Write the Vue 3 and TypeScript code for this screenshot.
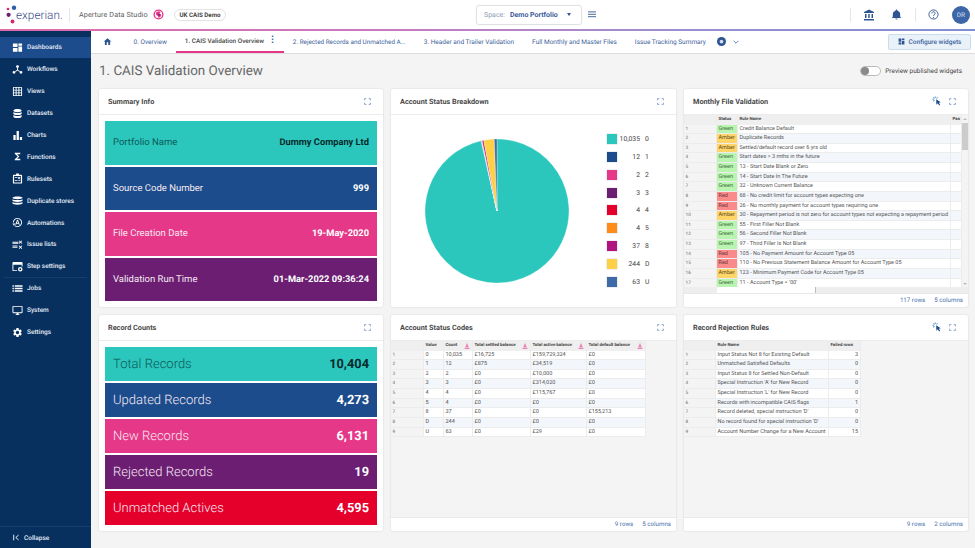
<script setup lang="ts">
interface NavItem { label: string; icon: string }
const gear = 'M19.14 12.94c.04-.3.06-.61.06-.94 0-.32-.02-.64-.07-.94l2.03-1.58c.18-.14.23-.41.12-.61l-1.92-3.32c-.12-.22-.37-.29-.59-.22l-2.39.96c-.5-.38-1.03-.7-1.62-.94l-.36-2.54c-.04-.24-.24-.41-.48-.41h-3.84c-.24 0-.43.17-.47.41l-.36 2.54c-.59.24-1.13.57-1.62.94l-2.39-.96c-.22-.08-.47 0-.59.22L2.74 8.87c-.12.21-.08.47.12.61l2.03 1.58c-.05.3-.09.63-.09.94s.02.64.07.94l-2.03 1.58c-.18.14-.23.41-.12.61l1.92 3.32c.12.22.37.29.59.22l2.39-.96c.5.38 1.03.7 1.62.94l.36 2.54c.05.24.24.41.48.41h3.84c.24 0 .44-.17.47-.41l.36-2.54c.59-.24 1.13-.56 1.62-.94l2.39.96c.22.08.47 0 .59-.22l1.92-3.32c.12-.22.07-.47-.12-.61l-2.01-1.58zM12 15.6c-1.98 0-3.6-1.62-3.6-3.6s1.62-3.6 3.6-3.6 3.6 1.62 3.6 3.6-1.62 3.6-3.6 3.6z'
const nav: NavItem[] = [
  { label: 'Dashboards', icon: 'M2 3h10v8H2zM14 3h8v5h-8zM14 10h8v11h-8zM2 13h10v8H2z' },
  { label: 'Workflows', icon: 'M12 2.5a3.2 3.2 0 1 1 0 6.4 3.2 3.2 0 0 1 0-6.4zM11 8.5h2v4.2l5.2 3.4-1.1 1.7-5.1-3.4-5.1 3.4-1.1-1.7L11 12.700zM4.500 15a3.200 3.200 0 1 1 0 6.400 3.200 3.200 0 0 1 0-6.400zM19.500 15a3.200 3.200 0 1 1 0 6.400 3.200 3.200 0 0 1 0-6.400z' },
  { label: 'Views', icon: 'M20 2H4c-1.100 0-2 .9-2 2v16c0 1.100.9 2 2 2h16c1.100 0 2-.9 2-2V4c0-1.100-.9-2-2-2zM8 20H4v-4h4v4zm0-6H4v-4h4v4zm0-6H4V4h4v4zm6 12h-4v-4h4v4zm0-6h-4v-4h4v4zm0-6h-4V4h4v4zm6 12h-4v-4h4v4zm0-6h-4v-4h4v4zm0-6h-4V4h4v4z' },
  { label: 'Datasets', icon: 'M12 2c5 0 9 1.500 9 3.500S17 9 12 9 3 7.500 3 5.500 7 2 12 2zM3 8.500C4.500 10 8 11 12 11s7.500-1 9-2.500V12c0 2-4 3.500-9 3.500S3 14 3 12zM3 15c1.500 1.500 5 2.500 9 2.500s7.500-1 9-2.500v3.500c0 2-4 3.500-9 3.500s-9-1.500-9-3.500z' },
  { label: 'Charts', icon: 'M3 11h5v11H3zM10 2h5v20h-5zM17 15h5v7h-5z' },
  { label: 'Functions', icon: 'M18 4H6v2l6.500 6L6 18v2h12v-3h-7l5-5-5-5h7z' },
  { label: 'Rulesets', icon: 'M9 1h6v3h5a2 2 0 0 1 2 2v15a2 2 0 0 1-2 2H4a2 2 0 0 1-2-2V6a2 2 0 0 1 2-2h5zM4.500 6.500v14h15v-14zM6 9h6v2H6zM14 8l1.500 1.500L17.500 8l1 1-2 2 2 2-1 1-2-2-1.500 1.500-1-1 1.500-1.500-1.500-1.500zM6 15h6v2H6zM14 15h4v2h-4z' },
  { label: 'Duplicate stores', icon: 'M12 3c6 0 11 1.300 11 3s-5 3-11 3S1 7.700 1 6s5-3 11-3zM1 9c2 1.300 6 2 11 2s9-.7 11-2v3c0 1.700-5 3-11 3S1 13.700 1 12zM1 15c2 1.300 6 2 11 2s9-.7 11-2v3c0 1.700-5 3-11 3S1 19.700 1 18z' },
  { label: 'Automations', icon: 'M12 2a10 10 0 1 1-7 17.200l1.400-1.400A8 8 0 1 0 4 12H2A10 10 0 0 1 12 2zM11 6h2l4 11h-2.100l-.8-2.500H9.900L9.100 17H7zM10.500 12.800h3L12 8.500zM1 14h6l-3 5z' },
  { label: 'Issue lists', icon: 'M1 6h13v2H1zM1 14h11v2H1zM1 17h11v2H1zM1 9h13v2H1zM16 3l2.500 2.500L21 3l1.300 1.300-2.500 2.500 2.500 2.500L21 10.600l-2.500-2.500-2.500 2.500-1.300-1.300 2.500-2.500-2.500-2.500zM16 14l2.500 2.500L21 14l1.300 1.300-2.500 2.500 2.500 2.500-1.300 1.300-2.500-2.500-2.500 2.500-1.300-1.300 2.500-2.500-2.500-2.500z' },
  { label: 'Step settings', icon: 'M3 2h18a2 2 0 0 1 2 2v8h-2V8H3v12h8v2H3a2 2 0 0 1-2-2V4a2 2 0 0 1 2-2zM18 13a5 5 0 1 1 0 10 5 5 0 0 1 0-10zm0 3a2 2 0 1 0 0 4 2 2 0 0 0 0-4z' },
  { label: 'Jobs', icon: 'M1 5h3v3H1zM6 5h17v3H6zM1 10.500h3v3H1zM6 10.500h17v3H6zM1 16h3v3H1zM6 16h17v3H6z' },
  { label: 'System', icon: 'M21 2H3c-1.100 0-2 .9-2 2v12c0 1.100.9 2 2 2h7v2H8v2h8v-2h-2v-2h7c1.100 0 2-.9 2-2V4c0-1.100-.9-2-2-2zm0 14H3V4h18v12z' },
  { label: 'Settings', icon: gear }
]
const tabs = ['0. Overview', '1. CAIS Validation Overview', '2. Rejected Records and Unmatched A...', '3. Header and Trailer Validation', 'Full Monthly and Master Files', 'Issue Tracking Summary']
const summary = [
  ['Portfolio Name', 'Dummy Company Ltd', 'teal'],
  ['Source Code Number', '999', 'blue'],
  ['File Creation Date', '19-May-2020', 'pink'],
  ['Validation Run Time', '01-Mar-2022 09:36:24', 'purple']
]
const counts = [
  ['Total Records', '10,404', 'teal'],
  ['Updated Records', '4,273', 'blue'],
  ['New Records', '6,131', 'pink'],
  ['Rejected Records', '19', 'purple'],
  ['Unmatched Actives', '4,595', 'red']
]
const legend = [
  { v: 10035, t: '10,035', l: '0', c: '#2bc7bd' },
  { v: 12, t: '12', l: '1', c: '#1c4c8c' },
  { v: 2, t: '2', l: '2', c: '#e63888' },
  { v: 3, t: '3', l: '3', c: '#6b1e72' },
  { v: 4, t: '4', l: '4', c: '#e4002b' },
  { v: 4, t: '4', l: '5', c: '#ff8c1a' },
  { v: 37, t: '37', l: '8', c: '#b0127f' },
  { v: 244, t: '244', l: 'D', c: '#ffd046' },
  { v: 63, t: '63', l: 'U', c: '#3f6aa8' }
]
const total = legend.reduce((s, d) => s + d.v, 0)
let acc = 0
const slices = legend.map((d) => {
  const a0 = (acc / total) * Math.PI * 2
  acc += d.v
  const a1 = (acc / total) * Math.PI * 2
  const p = (a: number) => `${(72 + 72 * Math.sin(a)).toFixed(2)} ${(72 - 72 * Math.cos(a)).toFixed(2)}`
  return { c: d.c, d: `M72 72L${p(a0)}A72 72 0 ${a1 - a0 > Math.PI ? 1 : 0} 1 ${p(a1)}Z` }
})
const monthly: [string, string][] = [
  ['Green', 'Credit Balance Default'], ['Amber', 'Duplicate Records'], ['Amber', 'Settled/default record over 6 yrs old'],
  ['Green', 'Start dates > 3 mths in the future'], ['Green', '13 - Start Date Blank or Zero'], ['Green', '14 - Start Date In The Future'],
  ['Green', '32 - Unknown Current Balance'], ['Red', '68 - No credit limit for account types expecting one'],
  ['Red', '26 - No monthly payment for account types requiring one'],
  ['Amber', '30 - Repayment period is not zero for account types not expecting a repayment period'],
  ['Green', '55 - First Filler Not Blank'], ['Green', '56 - Second Filler Not Blank'], ['Green', '97 - Third Filler Is Not Blank'],
  ['Red', '105 - No Payment Amount for Account Type 05'], ['Red', '110 - No Previous Statement Balance Amount for Account Type 05'],
  ['Amber', '123 - Minimum Payment Code for Account Type 05'], ['Green', "11 - Account Type = '00'"]
]
const codes = [
  ['0', '10,035', '£16,725', '£159,729,324', '£0'], ['1', '12', '£875', '£34,519', '£0'], ['2', '2', '£0', '£10,000', '£0'],
  ['3', '3', '£0', '£314,020', '£0'], ['4', '4', '£0', '£115,767', '£0'], ['5', '4', '£0', '£0', '£0'],
  ['8', '37', '£0', '£0', '£155,213'], ['D', '244', '£0', '£0', '£0'], ['U', '63', '£0', '£29', '£0']
]
const codeHeads = ['Value', 'Count', 'Total settled balance', 'Total active balance', 'Total default balance']
const rejects: [string, number][] = [
  ['Input Status Not 8 for Existing Default', 3], ['Unmatched Satisfied Defaults', 0], ['Input Status 8 for Settled Non-Default', 0],
  ["Special Instruction 'A' for New Record", 0], ["Special Instruction 'L' for New Record", 0], ['Records with incompatible CAIS flags', 1],
  ["Record deleted, special instruction 'D'", 0], ["No record found for special instruction 'D'", 0], ['Account Number Change for a New Account', 15]
]
</script>

<template>
  <div class="app">
    <header class="top">
      <div class="logo">
        <svg class="dots" viewBox="0 0 12 20" width="12" height="20">
          <circle cx="2" cy="4" r="1.300" fill="#d6246e" />
          <circle cx="8" cy="2.800" r="2.200" fill="#2d5ea8" />
          <circle cx="2.600" cy="9.800" r="2.100" fill="#6b1e72" />
          <circle cx="6.500" cy="16.500" r="1.900" fill="#d6246e" />
        </svg>
        <span class="logo-text">experian<i>.</i></span>
      </div>
      <span class="vsep logo-sep"></span>
      <span class="product">Aperture Data Studio</span>
      <svg class="globe" viewBox="0 0 24 24" width="11" height="11"><circle cx="12" cy="12" r="9.500" fill="#fff" stroke="#e63888" stroke-width="3" /><path d="M11 5l-5 3 1 5 4 2 1 5 5-4 1-4-4-2 3-4z" fill="#e63888" /><path d="M12 10l3 2-1 3-3-1z" fill="#6b1e72" /></svg>
      <span class="badge">UK CAIS Demo</span>
      <div class="space">
        <span class="space-l">Space:</span>
        <b>Demo Portfolio</b>
        <span class="caret"></span>
      </div>
      <svg class="burger" viewBox="0 0 10 8" width="8" height="7"><path d="M0 0h10v1.500H0zM0 3h10v1.500H0zM0 6h10v1.500H0z" fill="#6f86ad" /></svg>
      <span class="vsep sep-a"></span>
      <svg class="hi" viewBox="0 0 24 24" width="12" height="12"><path d="M12 1L2 6v2h20V6zM4 10h3v8H4zM10.500 10h3v8h-3zM17 10h3v8h-3zM2 20h20v3H2z" fill="#2e5590" /></svg>
      <svg class="hi bell" viewBox="0 0 24 24" width="11" height="11"><path d="M12 23a2.500 2.500 0 0 0 2.500-2.500h-5A2.500 2.500 0 0 0 12 23zm8-6v-6c0-3.600-2.200-6.500-6-7.400V3a2 2 0 1 0-4 0v.6C6.200 4.500 4 7.400 4 11v6l-2 2v.5h20V19z" fill="#2e5590" /></svg>
      <span class="vsep sep-b"></span>
      <svg class="hi" viewBox="0 0 24 24" width="11" height="11"><circle cx="12" cy="12" r="10" fill="none" stroke="#2e5590" stroke-width="2" /><path d="M8.500 9.500a3.500 3.500 0 1 1 5.500 2.800c-1.300.9-2 1.500-2 3.200" fill="none" stroke="#2e5590" stroke-width="2" /><circle cx="12" cy="18.500" r="1.300" fill="#2e5590" /></svg>
      <span class="avatar">DR</span>
    </header>
    <div class="rule"></div>
    <div class="body">
      <aside class="side">
        <template v-for="(n, i) in nav" :key="n.label">
          <div class="nav" :class="{ on: i === 0 }">
            <svg viewBox="0 0 24 24" width="11" height="11"><path :d="n.icon" fill="#fff" fill-rule="evenodd" /></svg>
            <span>{{ n.label }}</span>
          </div>
          <div v-if="n.label === 'Step settings'" class="nav-div"></div>
        </template>
        <div class="collapse">
          <svg viewBox="0 0 10 10" width="7" height="7"><path d="M1 1v8M8 1.500L4 5l4 3.500" fill="none" stroke="#fff" stroke-width="1.300" /></svg>
          <span>Collapse</span>
        </div>
      </aside>
      <main class="main">
        <nav class="tabs">
          <span class="home">
            <svg viewBox="0 0 24 24" width="9" height="9"><path d="M10 21v-7h4v7h5v-9h3L12 3 2 12h3v9z" fill="#2e5590" /></svg>
          </span>
          <span v-for="(t, i) in tabs" :key="t" class="tab" :class="{ act: i === 1 }">
            {{ t }}<span v-if="i === 1" class="kebab">⋮</span>
          </span>
          <svg class="plus" viewBox="0 0 24 24" width="9" height="9"><circle cx="12" cy="12" r="12" fill="#2e5590" /><circle cx="12" cy="12" r="5" fill="#cfdcf0" /></svg>
          <svg class="chev" viewBox="0 0 10 6" width="6" height="4"><path d="M1 1l4 4 4-4" fill="none" stroke="#3d639d" stroke-width="1.300" /></svg>
          <button class="config">
            <svg viewBox="0 0 24 24" width="7" height="7"><path d="M2 2h9v11H2zM13 2h9v6h-9zM13 10h9v12h-9zM2 15h9v7H2z" fill="#2e5590" /></svg>
            Configure widgets
          </button>
        </nav>
        <div class="content">
          <div class="page-head">
            <h1>1. CAIS Validation Overview</h1>
            <span class="toggle"><i></i></span>
            <span class="toggle-l">Preview published widgets</span>
          </div>
          <div class="grid">
            <section class="card">
              <div class="card-h"><span>Summary Info</span>
                <svg class="exp" viewBox="0 0 12 12" width="7" height="7"><path d="M1 4V1h3M8 1h3v3M11 8v3H8M4 11H1V8" fill="none" stroke="#6d8cbc" stroke-width="1.300" /></svg>
              </div>
              <div class="bars">
                <div v-for="r in summary" :key="r[0]" class="bar small" :class="r[2]"><span>{{ r[0] }}</span><b>{{ r[1] }}</b></div>
              </div>
            </section>
            <section class="card">
              <div class="card-h"><span>Account Status Breakdown</span>
                <svg class="exp" viewBox="0 0 12 12" width="7" height="7"><path d="M1 4V1h3M8 1h3v3M11 8v3H8M4 11H1V8" fill="none" stroke="#6d8cbc" stroke-width="1.300" /></svg>
              </div>
              <div class="chart">
                <svg viewBox="0 0 144 144" width="144" height="144"><path v-for="s in slices" :key="s.c" :d="s.d" :fill="s.c" stroke="#fff" stroke-width="0.300" /></svg>
                <div class="legend">
                  <div v-for="d in legend" :key="d.l" class="leg"><i :style="{ background: d.c }"></i><span class="lv">{{ d.t }}</span><span class="ll">{{ d.l }}</span></div>
                </div>
              </div>
            </section>
            <section class="card">
              <div class="card-h"><span>Monthly File Validation</span>
                <svg class="clk" viewBox="0 0 24 24" width="10" height="10"><path d="M10 8l11 7-4.500 1 3 5-2.500 1.500-3-5-3.500 3.500z" fill="#1c4c8c" /><path d="M8 1v4M1 8h4M3 3l3 3M13 3l-2 3M3 13l3-3" stroke="#5f9ad6" stroke-width="2.500" /></svg>
                <svg class="exp" viewBox="0 0 12 12" width="7" height="7"><path d="M1 4V1h3M8 1h3v3M11 8v3H8M4 11H1V8" fill="none" stroke="#6d8cbc" stroke-width="1.300" /></svg>
              </div>
              <div class="twrap">
                <div class="tscroll">
                  <div class="t mft">
                    <div class="row head"><span></span><span>Status</span><span>Rule Name</span><span>Pas</span></div>
                    <div v-for="(r, i) in monthly" :key="i" class="row">
                      <span class="ix">{{ i + 1 }}</span><span :class="'s-' + r[0].toLowerCase()">{{ r[0] }}</span><span>{{ r[1] }}</span><span></span>
                    </div>
                  </div>
                  <div class="vbar"><u></u><i></i><u class="dn"></u></div>
                </div>
                <div class="hbar"><i></i><i></i></div>
              </div>
              <div class="card-f"><span>117 rows</span><span>5 columns</span></div>
            </section>
            <section class="card">
              <div class="card-h"><span>Record Counts</span>
                <svg class="exp" viewBox="0 0 12 12" width="7" height="7"><path d="M1 4V1h3M8 1h3v3M11 8v3H8M4 11H1V8" fill="none" stroke="#6d8cbc" stroke-width="1.300" /></svg>
              </div>
              <div class="bars">
                <div v-for="r in counts" :key="r[0]" class="bar big" :class="r[2]"><span>{{ r[0] }}</span><b>{{ r[1] }}</b></div>
              </div>
            </section>
            <section class="card">
              <div class="card-h"><span>Account Status Codes</span>
                <svg class="exp" viewBox="0 0 12 12" width="7" height="7"><path d="M1 4V1h3M8 1h3v3M11 8v3H8M4 11H1V8" fill="none" stroke="#6d8cbc" stroke-width="1.300" /></svg>
              </div>
              <div class="twrap">
                <div class="t cod">
                  <div class="row head"><span></span>
                    <span v-for="(h, i) in codeHeads" :key="h" class="hc">{{ h }}<svg v-if="i > 0" class="warn" viewBox="0 0 10 10" width="6" height="6"><path d="M5 0l3 7H2zM1 8h8v2H1z" fill="#e986b8" /></svg></span>
                  </div>
                  <div v-for="(r, i) in codes" :key="i" class="row"><span class="ix">{{ i + 1 }}</span><span v-for="(c, j) in r" :key="j">{{ c }}</span></div>
                </div>
              </div>
              <div class="card-f"><span>9 rows</span><span>5 columns</span></div>
            </section>
            <section class="card">
              <div class="card-h"><span>Record Rejection Rules</span>
                <svg class="clk" viewBox="0 0 24 24" width="10" height="10"><path d="M10 8l11 7-4.500 1 3 5-2.500 1.500-3-5-3.500 3.500z" fill="#1c4c8c" /><path d="M8 1v4M1 8h4M3 3l3 3M13 3l-2 3M3 13l3-3" stroke="#5f9ad6" stroke-width="2.500" /></svg>
                <svg class="exp" viewBox="0 0 12 12" width="7" height="7"><path d="M1 4V1h3M8 1h3v3M11 8v3H8M4 11H1V8" fill="none" stroke="#6d8cbc" stroke-width="1.300" /></svg>
              </div>
              <div class="twrap">
                <div class="t rej">
                  <div class="row head"><span></span><span>Rule Name</span><span>Failed rows</span></div>
                  <div v-for="(r, i) in rejects" :key="i" class="row"><span class="ix">{{ i + 1 }}</span><span>{{ r[0] }}</span><span class="num">{{ r[1] }}</span></div>
                </div>
              </div>
              <div class="card-f"><span>9 rows</span><span>2 columns</span></div>
            </section>
          </div>
        </div>
      </main>
    </div>
  </div>
</template>

<style>
html, body { margin: 0; overflow: hidden; }
</style>

<style scoped>
.app { width: 975px; height: 548px; display: flex; flex-direction: column; font-family: Roboto, "Liberation Sans", sans-serif; color: #444; background: #f4f4f4; overflow: hidden; text-rendering: geometricPrecision; }
.top { height: 29px; flex: none; display: flex; align-items: center; background: #fff; }
.rule { height: 1.500px; flex: none; background: linear-gradient(90deg, #e06aa8, #c77ac0 40%, #9a8fd0 70%, #7f8fd0); }
.logo { display: flex; align-items: center; margin-left: 6px; width: 60px; }
.dots { flex: none; }
.logo-text { font-size: 11.800px; font-weight: 300; color: #3b4a8c; margin-left: -2px; }
.logo-text i { font-style: normal; color: #7b4a94; }
.vsep { width: 1px; height: 14px; background: #e6e6e6; flex: none; }
.logo-sep { margin-left: 3px; }
.product { font-size: 7.200px; color: #5b5b5b; margin-left: 9px; letter-spacing: 0.100px; width: 74px; white-space: nowrap; }
.badge { margin-left: 10px; width: 52px; height: 12px; box-sizing: border-box; border: 1px solid #e2e2e2; border-radius: 6px; font-size: 6.200px; font-weight: 700; color: #444; display: flex; align-items: center; justify-content: center; white-space: nowrap; }
.space { margin-left: 250px; width: 106px; height: 20px; box-sizing: border-box; border: 1px solid #e2e2e2; border-radius: 3px; display: flex; align-items: center; padding-left: 7px; font-size: 7px; white-space: nowrap; box-shadow: 0 0 1px #ddd; }
.space-l { color: #8b9bb4; width: 26px; }
.space b { color: #3a5a9a; font-weight: 700; width: 57px; }
.caret { width: 0; height: 0; border: 2.500px solid transparent; border-top: 3px solid #2e5590; border-bottom: 0; }
.burger { margin-left: 6px; }
.sep-a { margin-left: 254px; }
.hi { flex: none; }
.sep-a + .hi { margin-left: 12px; }
.bell { margin-left: 16px; }
.sep-b { margin-left: 13px; }
.sep-b + .hi { margin-left: 12px; }
.avatar { margin-left: 13px; width: 18px; height: 18px; border-radius: 50%; background: #3c66a5; color: #b9cbe5; font-size: 6.500px; font-weight: 500; display: flex; align-items: center; justify-content: center; flex: none; }
.body { flex: 1; display: flex; min-height: 0; }
.side { width: 91px; flex: none; background: #07305f; display: flex; flex-direction: column; padding-top: 6px; box-sizing: border-box; }
.nav { height: 21.900px; flex: none; display: flex; align-items: center; padding-left: 11.500px; gap: 4.500px; font-size: 6.500px; font-weight: 500; color: #e4ebf5; white-space: nowrap; }
.nav.on { background: #1c4c8c; }
.nav-div { height: 0; margin: 0 4px -1px; border-top: 1px solid #14406f; }
.collapse { margin-top: auto; height: 21px; border-top: 1px solid #14406f; display: flex; align-items: center; padding-left: 13px; gap: 4px; font-size: 6.500px; font-weight: 500; color: #e4ebf5; }
.main { flex: 1; min-width: 0; display: flex; flex-direction: column; }
.tabs { height: 23px; flex: none; box-sizing: border-box; background: #fff; border-bottom: 1px solid #ddd; display: flex; align-items: center; font-size: 6.500px; color: #3d639d; white-space: nowrap; }
.home { width: 33.500px; display: flex; justify-content: center; }
.tab { height: 23px; box-sizing: border-box; display: flex; align-items: center; padding: 0 9px; }
.tab:nth-child(4) { font-size: 6.350px; }
.tab.act { color: #444; font-weight: 500; font-size: 6.400px; border-bottom: 2px solid #e63888; width: 108px; }
.kebab { color: #3d639d; margin-left: 4px; font-size: 9px; font-weight: 700; line-height: 1; }
.plus { margin-left: 2.500px; }
.chev { margin-left: 7px; }
.config { margin-left: auto; margin-right: 4px; width: 83px; height: 16px; box-sizing: border-box; background: #e9f1f9; border: 1px solid #cbdcec; border-radius: 2px; color: #3d639d; font: 500 6.500px Roboto, sans-serif; text-rendering: geometricPrecision; display: flex; align-items: center; justify-content: center; gap: 4px; padding: 0; }
.content { flex: 1; min-height: 0; padding: 0 7px 0 8px; background: #f4f4f4; }
.page-head { height: 35px; display: flex; align-items: center; }
h1 { margin: 1px 0 0; font-size: 13.400px; font-weight: 400; color: #666; flex: 1; white-space: nowrap; }
.toggle { width: 21px; height: 10px; box-sizing: border-box; border: 1px solid #bbb; border-radius: 5px; background: #fff; display: flex; align-items: center; margin-right: 4px; }
.toggle i { width: 8px; height: 8px; border-radius: 50%; background: #8a8a8a; }
.toggle-l { font-size: 6.500px; color: #444; margin-right: 6px; white-space: nowrap; }
.grid { display: grid; grid-template-columns: 284px 285px 284px; grid-template-rows: 218px 216px; gap: 8px; }
.card { background: #fff; border-radius: 2px; box-shadow: 0 0 2px rgba(0, 0, 0, 0.150); display: flex; flex-direction: column; min-width: 0; min-height: 0; overflow: hidden; }
.card-h { height: 26px; flex: none; box-sizing: border-box; border-bottom: 1px solid #ececec; display: flex; align-items: center; padding: 0 12px 0 9px; gap: 7px; font-size: 7.300px; font-weight: 700; color: #4a4a4a; white-space: nowrap; }
.card-h span { flex: 1; }
.bars { flex: 1; min-height: 0; display: flex; flex-direction: column; gap: 2px; padding: 6.500px 6px 5.500px; }
.bar { flex: 1; display: flex; align-items: center; justify-content: space-between; padding: 0 8px; box-shadow: 0 0 0 0.500px rgba(255, 255, 255, 0.600); white-space: nowrap; color: #f6e9f2; }
.bar b { color: #fff; font-weight: 700; }
.bar.small { font-size: 9.500px; font-weight: 400; }
.bar.small b { font-size: 9.300px; }
.bar.big { font-size: 13px; font-weight: 300; }
.bar.big b { font-size: 12.800px; }
.teal { background: #2bc7bd; color: #0b5a58; }
.teal b { color: #062a2c; }
.blue { background: #1c4c8c; }
.pink { background: #e63888; }
.purple { background: #6b1e72; }
.red { background: #e4002b; }
.chart { flex: 1; display: flex; align-items: center; padding-left: 34px; gap: 38px; min-height: 0; }
.legend { display: flex; flex-direction: column; }
.leg { height: 17.800px; display: grid; grid-template-columns: 10px 23px auto; align-items: center; font-size: 6.800px; color: #444; }
.leg i { width: 10px; height: 10px; box-shadow: 0 0 0 0.500px #ddd; }
.lv { text-align: right; }
.ll { margin-left: 5px; }
.twrap { flex: 1; min-height: 0; background: #f4f4f4; display: flex; flex-direction: column; }
.tscroll { flex: 1; min-height: 0; overflow: hidden; display: flex; }
.t { font-size: 5.500px; color: #555; flex: none; align-self: flex-start; }
.row { display: grid; height: 9.640px; }
.row > span { background: #fff; box-sizing: border-box; border-right: 1px solid #ececec; border-bottom: 1px solid #ececec; padding: 0 1.500px; white-space: nowrap; overflow: hidden; line-height: 9.640px; }
.row:nth-child(odd) > span { background: #f3f6fb; }
.row.head { height: 10px; }
.row.head > span, .row:nth-child(odd).head > span { background: #efefef; font-weight: 700; color: #444; font-size: 4.400px; border-bottom: 0; line-height: 10px; }
.row > span.ix, .row:nth-child(odd) > span.ix { background: #f4f4f4; font-size: 4.700px; color: #666; }
.row > span.s-green, .row:nth-child(odd) > span.s-green { background: #b9f5b0; color: #3d6b3d; }
.row > span.s-amber, .row:nth-child(odd) > span.s-amber { background: #ffd56a; color: #5a4a20; }
.row > span.s-red, .row:nth-child(odd) > span.s-red { background: #fb8a8a; color: #6a3a3a; }
.row > span.num { text-align: right; padding-right: 2px; }
.row.head > span.hc { display: flex; justify-content: space-between; align-items: center; }
.mft .row { grid-template-columns: 33px 21px 213px 11px; }
.vbar { flex: 1; background: #f4f4f4; display: flex; flex-direction: column; align-items: center; padding-top: 3px; }
.vbar i { display: block; height: 27px; width: 100%; margin-top: 3px; background: #ccc; flex: none; }
.vbar u { width: 0; height: 0; border: 2px solid transparent; border-bottom: 2px solid #bbb; border-top: 0; flex: none; }
.vbar u.dn { margin-top: auto; margin-bottom: 2px; transform: rotate(180deg); }
.hbar { height: 6px; flex: none; background: #eee; display: flex; padding-left: 33px; }
.hbar i { width: 49px; background: #fff; }
.hbar i + i { border-right: 1px solid #bbb; }
.cod .row { grid-template-columns: 33px 20px 29px 58px 56px 59px; }
.warn { margin-right: 1px; flex: none; }
.rej .row { grid-template-columns: 32px 113px 32px; }
.card-f { height: 13px; flex: none; display: flex; justify-content: flex-end; align-items: center; gap: 9px; padding-right: 5px; font-size: 6.200px; color: #4a72ad; border-top: 1px solid #e8e8e8; }
</style>
